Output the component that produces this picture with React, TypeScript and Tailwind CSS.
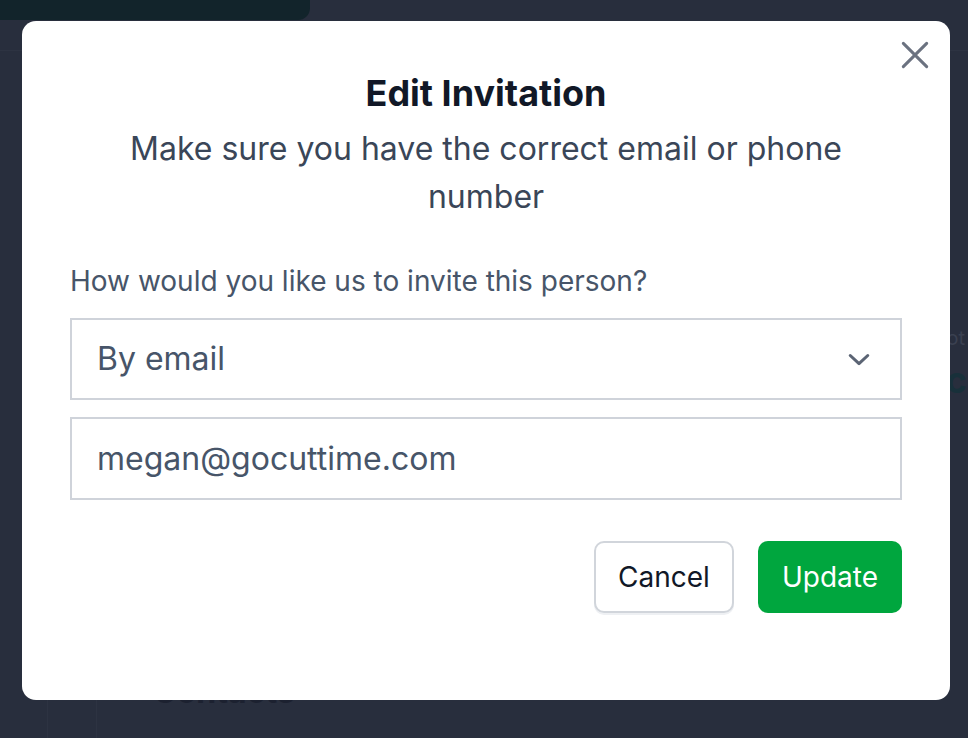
import React from 'react';

const font = { fontFamily: 'Inter, "Noto Sans", sans-serif' };

const ChevronDown = () => (
  <svg width="28" height="28" viewBox="0 0 24 24" fill="none" stroke="#5b6474" strokeWidth="2.6" strokeLinecap="round" strokeLinejoin="round">
    <path d="M4.5 9l7.5 7 7.5-7" />
  </svg>
);

const CloseIcon = () => (
  <svg width="28" height="28" viewBox="0 0 24 24" fill="none" stroke="#6b7280" strokeWidth="2.6" strokeLinecap="round">
    <path d="M2 2l20 20M22 2L2 22" />
  </svg>
);

const App: React.FC = () => {
  return (
    <div className="relative w-[968px] h-[738px] overflow-hidden bg-[#282e3d]" style={font}>
      {/* page behind the overlay */}
      <div className="flex flex-col h-full">
        <div className="w-[310px] h-[20px] bg-[#12242b] rounded-br-xl" />
        <div className="mt-[30px] h-px bg-[#2d3342]" />
        <div className="flex flex-1">
          <div className="w-[48px] border-r border-[#2d3342]" />
          <div className="w-[49px] border-r border-[#2d3342]" />
          <div className="flex-1 flex flex-col justify-end">
            <div className="mb-[22px] ml-[56px] text-[32px] font-bold text-[#1c2130]">Contacts</div>
          </div>
        </div>
      </div>
      <div className="absolute right-[3px] top-[328px] text-[20px] text-[#3a4050] leading-none">Spot</div>
      <div className="absolute right-[1px] top-[362px] text-[36px] font-bold text-[#18303a] leading-none">Disc</div>

      {/* modal */}
      <div className="absolute left-[22px] top-[21px] w-[928px] h-[679px] bg-white rounded-[14px] px-12 pt-[52px]">
        <button className="absolute right-[21px] top-[20px]">
          <CloseIcon />
        </button>
        <h2 className="text-center text-[36px] leading-[40px] font-bold text-[#111827]">Edit Invitation</h2>
        <p className="mt-3 mx-auto max-w-[780px] text-center text-[32px] leading-[48px] text-[#3a4658]">
          Make sure you have the correct email or phone number
        </p>
        <p className="mt-[44px] text-[28px] leading-[32px] text-[#475569]">How would you like us to invite this person?</p>
        <div className="mt-[21px] h-[82px] border-2 border-[#cfd3da] flex items-center justify-between pl-[25px] pr-[27px]">
          <span className="text-[32px] text-[#475569]">By email</span>
          <ChevronDown />
        </div>
        <div className="mt-[17px] h-[83px] border-2 border-[#cfd3da] flex items-center pl-[25px]">
          <span className="text-[32px] text-[#475569]">megan@gocuttime.com</span>
        </div>
        <div className="mt-[41px] flex justify-end gap-6">
          <button className="w-[140px] h-[72px] rounded-[10px] border-2 border-[#d1d5db] bg-white text-[28px] text-[#111827] shadow-[0_2px_0_#eef0f3]">
            Cancel
          </button>
          <button className="w-[144px] h-[72px] rounded-[10px] bg-[#00a63e] text-[28px] text-white">
            Update
          </button>
        </div>
      </div>
    </div>
  );
};

export default App;
